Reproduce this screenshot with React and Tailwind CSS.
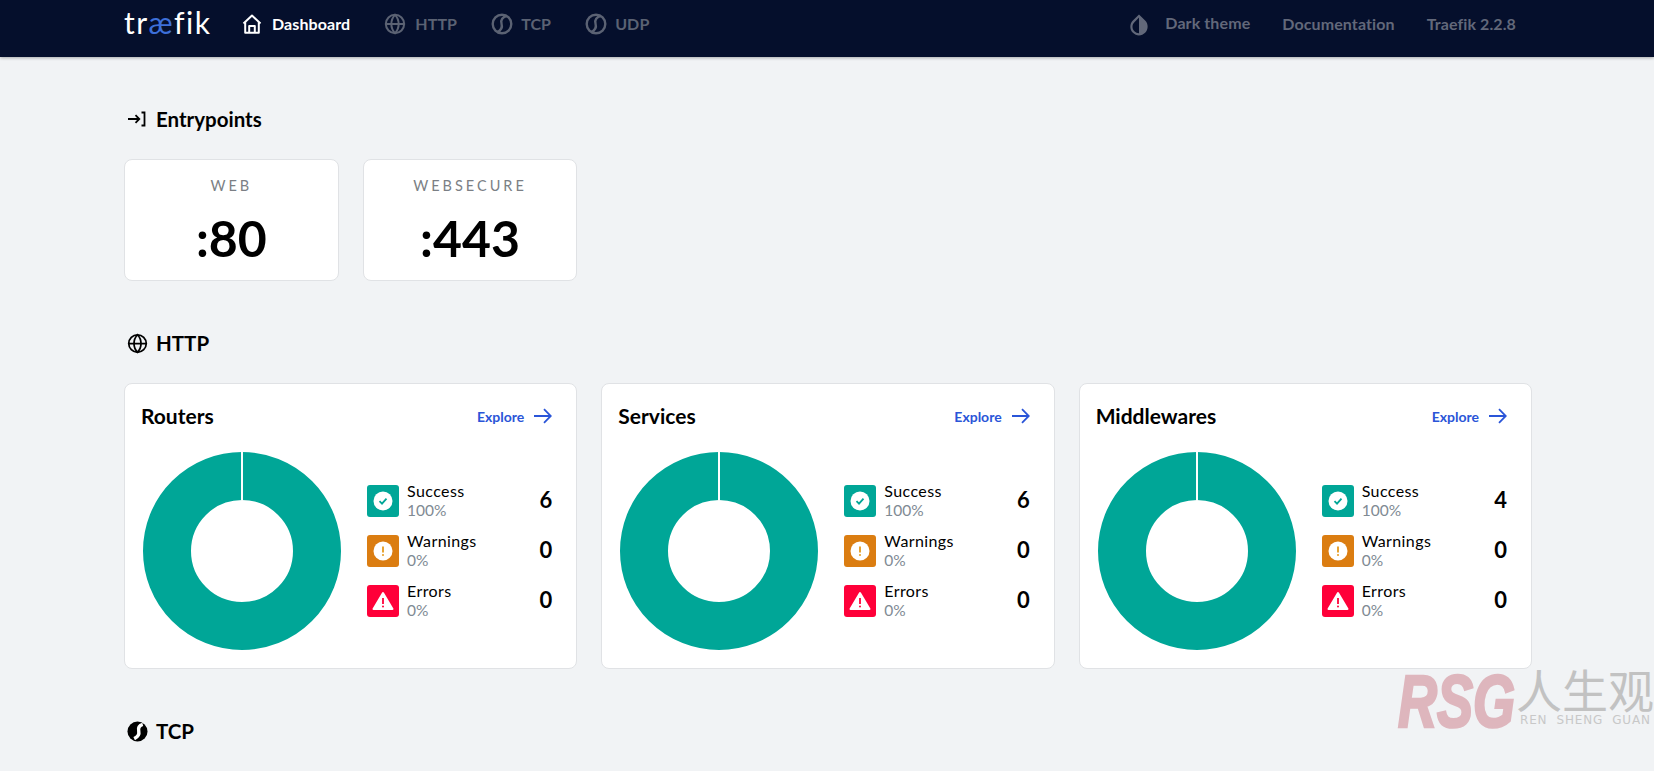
import { Globe } from 'lucide-react'

const font = "font-['Lato','Noto_Sans',sans-serif]"

function HomeIcon() {
  return (
    <svg width="20" height="20" viewBox="0 0 20 20" fill="none" stroke="currentColor" strokeWidth="2" strokeLinejoin="round">
      <path d="M1.500 9.500 10 1.500l8.500 8" />
      <path d="M3.200 8.200V18.700h13.600V8.200" />
      <path d="M7.200 18.700v-6.700h5.600v6.700" />
    </svg>
  )
}

function BallIcon() {
  return (
    <svg width="22" height="22" viewBox="0 0 22 22" fill="none" stroke="currentColor" strokeWidth="2.400">
      <circle cx="11" cy="11" r="9.300" />
      <path d="M16 2.800C11.500 4 9.500 7 10.500 10.500c1 3.500-.5 7-4.500 8.800" />
    </svg>
  )
}

function DropIcon() {
  return (
    <svg width="26" height="26" viewBox="0 0 24 24" fill="currentColor">
      <path d="M17.66 7.930L12 2.270 6.340 7.930c-3.120 3.120-3.120 8.190 0 11.310C7.900 20.800 9.950 21.580 12 21.580c2.050 0 4.100-.780 5.660-2.340 3.120-3.120 3.120-8.190 0-11.310zM12 19.590c-1.600 0-3.110-.620-4.240-1.760C6.620 16.690 6 15.190 6 13.590s.620-3.110 1.760-4.240L12 5.100v14.490z" />
    </svg>
  )
}

function EntryIcon() {
  return (
    <svg width="20" height="18" viewBox="0 0 20 18" fill="none" stroke="#000" strokeWidth="1.800">
      <path d="M1 9h11M8.500 5.200 12.300 9l-3.800 3.800" />
      <path d="M14.500 2.500h3v13h-3" />
    </svg>
  )
}

function TcpIcon() {
  return (
    <svg width="21" height="21" viewBox="0 0 22 22" fill="none">
      <circle cx="11" cy="11" r="10.500" fill="#000" />
      <path d="M16.500 3.500C13 4.500 11.500 7 12.300 10.500c.8 3.500-.8 6-4.800 8" stroke="#fff" strokeWidth="3.600" />
    </svg>
  )
}

function ArrowIcon() {
  return (
    <svg width="18" height="16" viewBox="0 0 18 16" fill="none" stroke="currentColor" strokeWidth="1.800">
      <path d="M0 8h16.500M10 1.200 16.800 8 10 14.800" />
    </svg>
  )
}

function StatusIcon({ type }) {
  if (type === 'success') {
    return (
      <div className="w-8 h-8 rounded-[3px] bg-[#00a697] flex items-center justify-center">
        <svg width="20" height="20" viewBox="0 0 20 20" fill="none">
          <circle cx="10" cy="10" r="9.500" fill="#fff" />
          <path d="M6.500 10.200 9 12.600l4.500-5" stroke="#00a697" strokeWidth="1.800" />
        </svg>
      </div>
    )
  }
  if (type === 'warning') {
    return (
      <div className="w-8 h-8 rounded-[3px] bg-[#db7d11] flex items-center justify-center">
        <svg width="20" height="20" viewBox="0 0 20 20" fill="none">
          <circle cx="10" cy="10" r="9.500" fill="#fff" />
          <path d="M10 5.500v6" stroke="#e59a1c" strokeWidth="1.800" />
          <circle cx="10" cy="14" r="1" fill="#e59a1c" />
        </svg>
      </div>
    )
  }
  return (
    <div className="w-8 h-8 rounded-[3px] bg-[#ff0039] flex items-center justify-center">
      <svg width="22" height="20" viewBox="0 0 22 20" fill="none">
        <path d="M11 2 20.500 18H1.500z" fill="#fff" stroke="#fff" strokeWidth="2" strokeLinejoin="round" />
        <path d="M11 7v6" stroke="#ff0039" strokeWidth="1.800" />
        <circle cx="11" cy="15.500" r="1" fill="#ff0039" />
      </svg>
    </div>
  )
}

function Donut() {
  return (
    <svg width="198" height="198" viewBox="0 0 198 198" className="shrink-0">
      <circle cx="99" cy="99" r="75" fill="none" stroke="#00a697" strokeWidth="48" />
      <path d="M99 0v48" stroke="#fff" strokeWidth="2" />
    </svg>
  )
}

function Row({ type, label, pct, count }) {
  return (
    <div className="flex items-center h-9">
      <StatusIcon type={type} />
      <div className="ml-2 flex-1">
        <div className="-mt-[1px] text-[16px] tracking-[0.4px] leading-[17px] text-black">{label}</div>
        <div className="mt-[2px] text-[15.500px] leading-[18px] text-[#808a93]">{pct}</div>
      </div>
      <div className="-mt-1 text-[22px] font-bold text-black">{count}</div>
    </div>
  )
}

function Heading({ icon, children }) {
  return (
    <div className="flex items-center h-6 text-black">
      <div className="w-[32px] pl-[3px] flex items-center">{icon}</div>
      <div className="text-[20.500px] font-bold leading-6">{children}</div>
    </div>
  )
}

function Entry({ name, port }) {
  return (
    <div className="w-[214.670px] h-[122px] bg-white border border-[#e0e2e5] rounded-lg flex flex-col items-center">
      <div className="mt-4 text-[14.500px] leading-5 tracking-[3px] text-[#7b7f85]">{name}</div>
      <div className="mt-[12px] text-[50px] leading-[60px] font-bold text-black">{port}</div>
    </div>
  )
}

function StatCard({ title, success }) {
  return (
    <div className="h-[286px] bg-white border border-[#e0e2e5] rounded-lg">
      <div className="h-16 pl-4 pr-6 flex items-center justify-between">
        <div className="text-[21px] font-bold text-black">{title}</div>
        <div className="flex items-center gap-[10px] text-[#2a55d8] text-[14px] font-bold">
          Explore
          <ArrowIcon />
        </div>
      </div>
      <div className="mt-1 pl-[18px] pr-6 flex">
        <Donut />
        <div className="ml-[26px] pt-[31px] flex-1 flex flex-col gap-[14px]">
          <Row type="success" label="Success" pct="100%" count={success} />
          <Row type="warning" label="Warnings" pct="0%" count="0" />
          <Row type="error" label="Errors" pct="0%" count="0" />
        </div>
      </div>
    </div>
  )
}

export default function App() {
  return (
    <div className={`relative h-[771px] overflow-hidden bg-[#f1f3f5] ${font}`}>
      <nav className="h-[57px] bg-[#050f2c] shadow-[0_1px_3px_rgba(0,0,0,0.3)] flex items-start pl-[124px] pr-[138px] text-[16px] tracking-[0.1px] font-bold">
        <div className="w-[118px] mt-[4px] text-[30px] leading-9 tracking-[1.500px] text-white font-normal">
          tr<span className="text-[#3d6fd9]">æ</span>fik
        </div>
        <div className="mt-[12px] flex items-center text-white">
          <HomeIcon />
          <span className="ml-[10px]">Dashboard</span>
        </div>
        <div className="ml-[34px] mt-[12px] flex items-center text-[#5b6273]">
          <Globe size={22} strokeWidth={2.200} />
          <span className="ml-[9px]">HTTP</span>
        </div>
        <div className="ml-[34px] mt-[12px] flex items-center text-[#5b6273]">
          <BallIcon />
          <span className="ml-[8px]">TCP</span>
        </div>
        <div className="ml-[34px] mt-[12px] flex items-center text-[#5b6273]">
          <BallIcon />
          <span className="ml-[8px]">UDP</span>
        </div>
        <div className="ml-auto mt-[12px] flex items-center text-[#62687a]">
          <DropIcon />
          <span className="ml-[13px] -mt-[4px]">Dark theme</span>
          <span className="ml-[32px] -mt-[2px]">Documentation</span>
          <span className="ml-[32px] -mt-[2px]">Traefik 2.2.8</span>
        </div>
      </nav>

      <main className="pl-[124px] w-[1532px] pt-[50px]">
        <Heading icon={<EntryIcon />}>Entrypoints</Heading>
        <div className="mt-7 flex gap-6">
          <Entry name="WEB" port=":80" />
          <Entry name="WEBSECURE" port=":443" />
        </div>

        <div className="mt-[50px]">
          <Heading icon={<Globe size={21} strokeWidth={2} color="#000" />}>HTTP</Heading>
        </div>
        <div className="mt-7 grid grid-cols-3 gap-6">
          <StatCard title="Routers" success="6" />
          <StatCard title="Services" success="6" />
          <StatCard title="Middlewares" success="4" />
        </div>

        <div className="mt-[50px]">
          <Heading icon={<TcpIcon />}>TCP</Heading>
        </div>
      </main>

      {/* watermark sits over the page */}
      <div className="absolute left-[1398px] top-[664px] w-[256px] h-[70px] pointer-events-none">
        <div className="absolute left-0 top-[10px] scale-y-[1.37] text-[#deb6bd] text-[54px] leading-[54px] italic font-black [-webkit-text-stroke:2px_#deb6bd] font-['Liberation_Sans',sans-serif]">RSG</div>
        <div className="absolute left-[118px] top-[-1px] text-[#c2c2c2] text-[46px] leading-[50px] whitespace-nowrap font-['Noto_Sans_CJK_SC',sans-serif]">人生观</div>
        <div className="absolute left-[122px] top-[49px] text-[#c8c8c8] text-[12px] leading-[14px] tracking-[0.8px] whitespace-pre font-['DejaVu_Sans',sans-serif]">REN  SHENG  GUAN</div>
      </div>
    </div>
  )
}
